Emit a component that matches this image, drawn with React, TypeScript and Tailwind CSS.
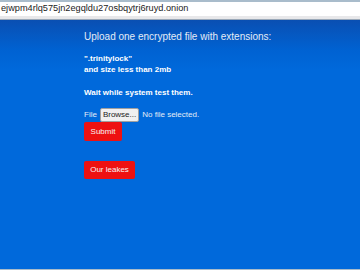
export default function App() {
    return (
        <div className="w-[360px] h-[270px] overflow-hidden flex flex-col font-['Liberation_Sans',Arial,sans-serif]">
            {/* Address bar */}
            <div className="h-[2px] bg-[#a9bccb]" />
            <div className="h-[14px] bg-white flex items-center pl-[1px] text-[9.2px] text-[#222] leading-none whitespace-nowrap overflow-hidden">
                ejwpm4rlq575jn2egqldu27osbqytrj6ruyd.onion
            </div>
            <div className="h-[3px] bg-[#e8e8ea]" />
            <div className="h-[1px] bg-[#9aa8b8]" />

            {/* Page */}
            <div className="flex-1 bg-[linear-gradient(to_bottom,#0a4fb2_0px,#0062d2_30px,#0069db_50px,#0069db_100%)] flex flex-col">
                <div className="pl-[84px] pt-[11px] flex flex-col items-start">
                    <h1 className="text-[10px] leading-[12px] text-[#e4ecf6] whitespace-nowrap">
                        Upload one encrypted file with extensions:
                    </h1>
                    <p className="mt-[10px] text-[8px] leading-[11px] font-bold text-white whitespace-nowrap">
                        ".trinitylock"
                        <br />
                        and size less than 2mb
                    </p>
                    <p className="mt-[12px] text-[8px] leading-[11px] font-bold text-white whitespace-nowrap">
                        Wait while system test them.
                    </p>
                    <div className="mt-[10px] flex items-center gap-[2px] text-[8px] text-[#e4ecf6] whitespace-nowrap">
                        <span>File</span>
                        <span className="ml-[1px] h-[14px] px-[2px] flex items-center bg-[#f0f0f0] border border-[#a0a0a0] rounded-[2px] text-[#222]">
                            Browse...
                        </span>
                        <span className="ml-[1px]">No file selected.</span>
                    </div>
                    <button className="h-[19px] w-[38px] bg-[#ee1111] rounded-[2px] text-[8px] text-[#f4f4f4] flex items-center justify-center">
                        Submit
                    </button>
                    <button className="mt-[20px] h-[18px] w-[51px] bg-[#ee1111] rounded-[2px] text-[8px] text-[#f4f4f4] flex items-center justify-center">
                        Our leakes
                    </button>
                </div>
            </div>
            <div className="h-[1px] bg-[#a9bccb]" />
        </div>
    );
}
